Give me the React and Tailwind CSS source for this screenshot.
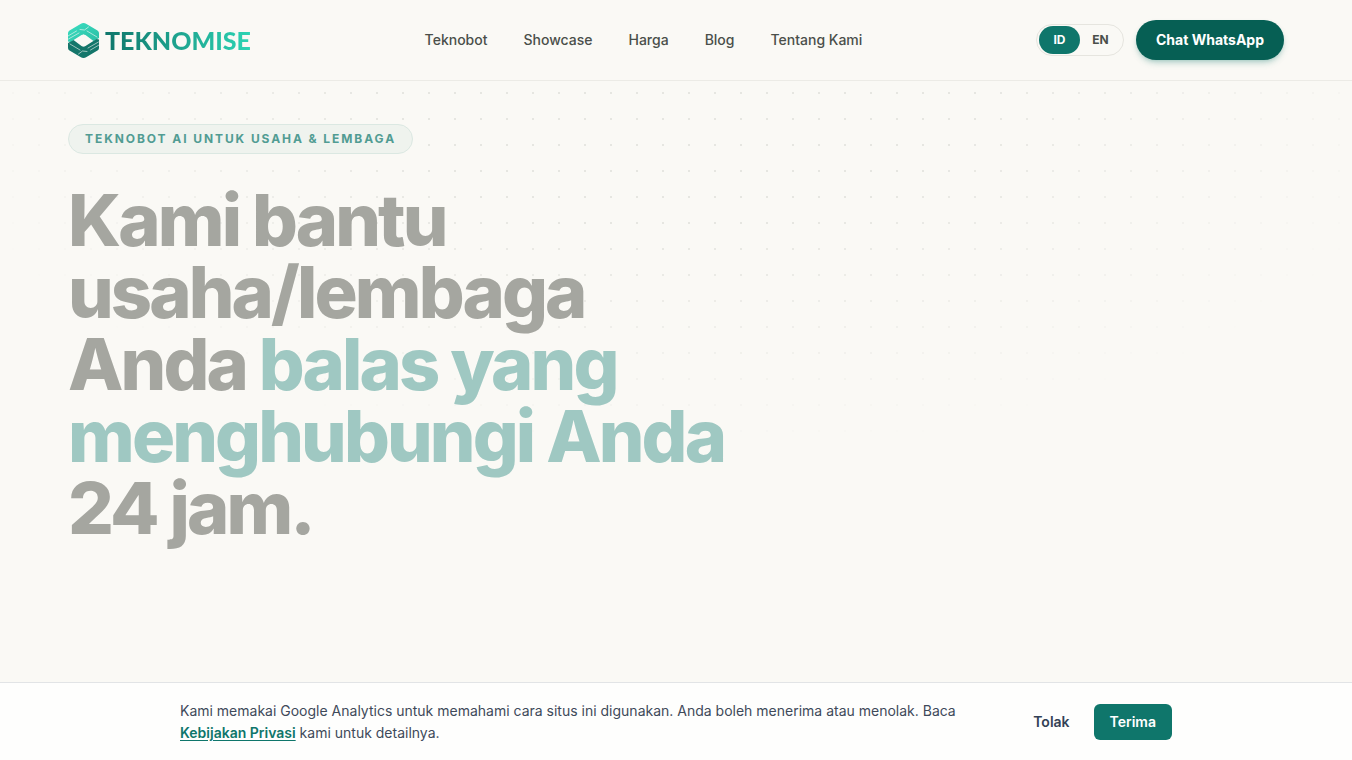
import { useState } from "react";

const navLinks = [
  { label: "Teknobot", href: "#teknobot" },
  { label: "Showcase", href: "#showcase" },
  { label: "Harga", href: "#harga" },
  { label: "Blog", href: "#blog" },
  { label: "Tentang Kami", href: "#tentang" },
];

function LogoMark() {
  return (
    <svg viewBox="0 0 62 70" className="h-[35px] w-[31px] shrink-0" aria-hidden="true">
      <defs>
        <linearGradient id="markTop" x1="0" y1="0" x2="1" y2="1">
          <stop offset="0" stopColor="#3adfc1" />
          <stop offset="1" stopColor="#2bbda5" />
        </linearGradient>
      </defs>
      {/* upper hand */}
      <path
        d="M0 37V20q0-3 3-5L25 2q6-4 12 0l22 13q3 2 3 5v10l-11 6L35 24q-4-2-8 0L5 38Z"
        fill="url(#markTop)"
      />
      {/* lower hand */}
      <path
        d="M62 33v17q0 3-3 5L37 68q-6 4-12 0L3 55q-3-2-3-5V40l11-6 16 12q4 2 8 0L57 32Z"
        fill="#14766a"
      />
      <g fill="none" stroke="#faf9f5" strokeWidth="1.2" strokeLinecap="round">
        <path d="M0 26 17 16M1 32 22 20M24 13l9 1 8-6M38 16l20 12" />
        <path d="M62 44 45 54M61 38 40 50M38 57l-9-1-8 6M24 54 4 42" />
      </g>
      {/* opening between the hands */}
      <path d="M31 23 47 35 31 47 15 35Z" fill="#faf9f5" />
    </svg>
  );
}

function LanguageSwitch({ lang, onChange }) {
  const base = "h-7 rounded-full px-3 text-xs font-bold flex items-center";
  return (
    <div className="flex h-8 items-center rounded-full border border-[#e6e5df] px-0.5">
      {["ID", "EN"].map((code) => (
        <button
          key={code}
          type="button"
          aria-pressed={lang === code}
          onClick={() => onChange(code)}
          className={`${base} w-[41px] justify-center ${
            lang === code ? "bg-[#0f766b] text-white" : "text-[#4a4f4a]"
          }`}
        >
          {code}
        </button>
      ))}
    </div>
  );
}

function Header() {
  const [lang, setLang] = useState("ID");

  return (
    <header className="sticky top-0 z-10 border-b border-[#ecebe6] bg-[#faf9f5]">
      <div className="mx-auto flex h-20 max-w-7xl items-center justify-between px-8">
        <a href="#top" className="flex items-center gap-1.5">
          <LogoMark />
          <span className="bg-linear-to-r from-[#0f766b] to-[#2dd4b4] bg-clip-text font-[Lato,sans-serif] text-[25px] leading-8 font-black text-transparent">
            TEKNOMISE
          </span>
        </a>

        <nav className="flex items-center gap-9">
          {navLinks.map((link) => (
            <a
              key={link.label}
              href={link.href}
              className="text-sm font-medium text-[#4a4f4a]"
            >
              {link.label}
            </a>
          ))}
        </nav>

        <div className="flex items-center gap-3">
          <LanguageSwitch lang={lang} onChange={setLang} />
          <a
            href="#whatsapp"
            className="flex h-10 items-center rounded-full bg-[#065f54] px-5 text-sm font-bold text-white shadow-md shadow-[#0f766b]/25"
          >
            Chat WhatsApp
          </a>
        </div>
      </div>
    </header>
  );
}

function Hero() {
  return (
    <section className="relative flex-1">
      {/* dotted backdrop, fades out towards the edges */}
      <div className="pointer-events-none absolute inset-x-0 -top-px h-[420px] bg-[radial-gradient(#e6e6e1_1px,transparent_1px)] bg-[size:26px_26px] mask-[radial-gradient(ellipse_56%_90%_at_50%_0%,#000_40%,transparent_100%)]" />

      <div className="relative mx-auto max-w-7xl px-8 pt-[43px] pb-32">
        <p className="inline-flex h-[30px] items-center rounded-full border border-[#dbe8e2] bg-[#eff3ee] px-4 text-xs font-bold tracking-[0.16em] text-[#519c93] uppercase">
          Teknobot AI untuk usaha &amp; lembaga
        </p>
        <h1 className="mt-[30px] max-w-[700px] text-[72px] leading-[72px] font-extrabold tracking-[-0.04em] text-[#a5a6a0]">
          Kami bantu usaha/lembaga Anda{" "}
          <span className="text-[#9fc8c2]">balas yang menghubungi Anda</span> 24
          jam.
        </h1>
      </div>
    </section>
  );
}

function CookieBanner() {
  return (
    <aside
      aria-label="Persetujuan cookie"
      className="sticky bottom-0 z-10 border-t border-[#e2e4e6] bg-[#fefefd]"
    >
      <div className="mx-auto flex max-w-5xl items-center justify-between gap-4 px-4 pt-[17px] pb-4">
        <p className="max-w-[800px] text-sm leading-[22px] text-[#3f4a5a]">
          Kami memakai Google Analytics untuk memahami cara situs ini digunakan.
          Anda boleh menerima atau menolak. Baca{" "}
          <a
            href="#privasi"
            className="font-semibold text-[#0f766b] underline underline-offset-2"
          >
            Kebijakan Privasi
          </a>{" "}
          kami untuk detailnya.
        </p>
        <div className="flex shrink-0 items-center gap-2">
          <button
            type="button"
            className="h-9 rounded-md px-4 text-sm font-semibold text-[#334155]"
          >
            Tolak
          </button>
          <button
            type="button"
            className="h-9 rounded-md bg-[#0f766b] px-4 text-sm font-semibold text-white"
          >
            Terima
          </button>
        </div>
      </div>
    </aside>
  );
}

export default function App() {
  return (
    <div
      id="top"
      className="flex min-h-screen flex-col bg-[#faf9f5] font-[Inter,sans-serif]"
    >
      <Header />
      <main className="flex flex-1 flex-col">
        <Hero />
      </main>
      <CookieBanner />
    </div>
  );
}
